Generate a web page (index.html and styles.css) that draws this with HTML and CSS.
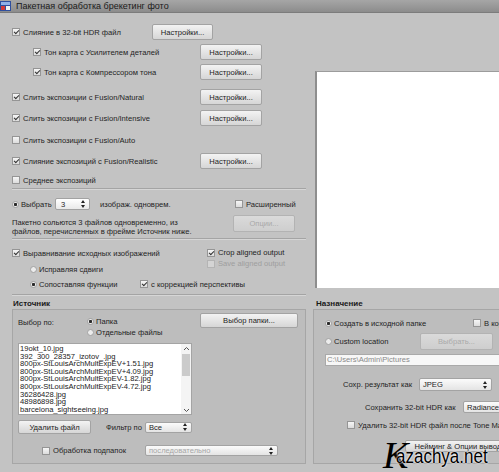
FILE: index.html
```html
<!DOCTYPE html>
<html lang="ru">
<head>
<meta charset="utf-8">
<title>Пакетная обработка брекетинг фото</title>
<link rel="stylesheet" href="styles.css">
</head>
<body>
<div class="window">
  <div class="titlebar">
    <span class="appicon"><svg width="11" height="10" viewBox="0 0 11 10"><rect x="0" y="0" width="11" height="10" fill="#2f4f9e"/><rect x="1" y="1" width="9" height="3" fill="#8fb0e8"/><rect x="1" y="5" width="4" height="4" fill="#d23a3a"/><rect x="6" y="5" width="4" height="4" fill="#f2f2f2"/></svg></span>
    <span class="title">Пакетная обработка брекетинг фото</span>
  </div>

  <div class="top">
    <div class="left">
      <div class="row r1 g-first">
        <span class="chk"><span class="cb on"></span>Слияние в 32-bit HDR файл</span>
        <span class="btn">Настройки...</span>
      </div>
      <div class="row r2 g-sub">
        <span class="chk"><span class="cb on"></span>Тон карта с Усилителем деталей</span>
        <span class="btn">Настройки...</span>
      </div>
      <div class="row r3 g-sub">
        <span class="chk"><span class="cb on"></span>Тон карта с Компрессором тона</span>
        <span class="btn">Настройки...</span>
      </div>
      <div class="row r4 g-main">
        <span class="chk"><span class="cb on"></span>Слить экспозиции с Fusion/Natural</span>
        <span class="btn">Настройки...</span>
      </div>
      <div class="row r5 g-main">
        <span class="chk"><span class="cb on"></span>Слить экспозиции с Fusion/Intensive</span>
        <span class="btn">Настройки...</span>
      </div>
      <div class="row r6 g-main">
        <span class="chk"><span class="cb"></span>Слить экспозиции с Fusion/Auto</span>
      </div>
      <div class="row r7 g-main">
        <span class="chk"><span class="cb on"></span>Слияние экспозиций с Fusion/Realistic</span>
        <span class="btn">Настройки...</span>
      </div>
      <div class="row r8 short">
        <span class="chk"><span class="cb"></span>Среднее экспозиций</span>
      </div>
      <div class="sep s1"></div>

      <div class="row r9 short">
        <span class="chk pick"><span class="rb on"></span>Выбрать</span>
        <span class="spin"><span>3</span><svg width="4" height="8" viewBox="0 0 4 8"><path d="M0 3L2 0L4 3ZM0 5L2 8L4 5Z" fill="#222"/></svg></span>
        <span class="count">изображ. одноврем.</span>
        <span class="chk"><span class="cb"></span>Расширенный</span>
      </div>
      <div class="opts">
        <div class="note">Пакетно сольются 3 файлов одновременно, из<br>файлов, перечисленных в фрейме Источник ниже.</div>
        <span class="btn dis optbtn">Опции...</span>
      </div>
      <div class="sep s2"></div>

      <div class="align">
        <div class="acol">
          <div class="arow first"><span class="chk"><span class="cb on"></span>Выравнивание исходных изображений</span></div>
          <div class="arow fix"><span class="chk"><span class="rb"></span>Исправляя сдвиги</span></div>
        </div>
        <div class="bcol">
          <div class="brow"><span class="chk"><span class="cb on"></span>Crop aligned output</span></div>
          <div class="brow dim"><span class="chk"><span class="cb off"></span>Save aligned output</span></div>
        </div>
      </div>
      <div class="row match">
        <span class="chk feat"><span class="rb on"></span>Сопоставляя функции</span>
        <span class="chk"><span class="cb on"></span>с коррекцией перспективы</span>
      </div>
      <div class="sep s3"></div>
    </div>
    <div class="right">
      <div class="preview"></div>
    </div>
  </div>

  <div class="bottom">
    <div class="group src">
      <div class="gtitle">Источник</div>
      <div class="gbox">
        <div class="src-top">
          <div class="lbl">Выбор по:</div>
          <div class="radios">
            <div class="rrow"><span class="rb on"></span>Папка</div>
            <div class="rrow"><span class="rb"></span>Отдельные файлы</div>
          </div>
          <span class="btn folder">Выбор папки...</span>
        </div>
        <div class="listbox">
          <div class="items">
            <div>19okt_10.jpg</div>
            <div>392_300_28357_izotov_.jpg</div>
            <div>800px-StLouisArchMultExpEV+1.51.jpg</div>
            <div>800px-StLouisArchMultExpEV+4.09.jpg</div>
            <div>800px-StLouisArchMultExpEV-1.82.jpg</div>
            <div>800px-StLouisArchMultExpEV-4.72.jpg</div>
            <div>36286428.jpg</div>
            <div>48986898.jpg</div>
            <div>barcelona_sightseeing.jpg</div>
          </div>
          <div class="scroll">
            <svg width="7" height="5" viewBox="0 0 7 5"><path d="M1 4L3.5 1.5L6 4" fill="none" stroke="#555" stroke-width="1"/></svg>
            <div class="thumb"></div>
            <div class="track"></div>
            <svg width="7" height="5" viewBox="0 0 7 5"><path d="M1 1L3.5 3.5L6 1" fill="none" stroke="#555" stroke-width="1"/></svg>
          </div>
        </div>
        <div class="src-row">
          <span class="btn del">Удалить файл</span>
          <span class="flt">Фильтр по</span>
          <span class="sel fsel"><span>Все</span><svg width="4" height="8" viewBox="0 0 4 8"><path d="M0 3L2 0L4 3ZM0 5L2 8L4 5Z" fill="#222"/></svg></span>
        </div>
        <div class="src-row sub">
          <span class="chk subchk"><span class="cb"></span>Обработка подпапок</span>
          <span class="sel psel dis"><span>последовательно</span><svg width="4" height="8" viewBox="0 0 4 8"><path d="M0 3L2 0L4 3ZM0 5L2 8L4 5Z" fill="#222"/></svg></span>
        </div>
      </div>
    </div>

    <div class="group dst">
      <div class="gtitle">Назначение</div>
      <div class="gbox">
        <div class="drow d1">
          <span class="chk here"><span class="rb on"></span>Создать в исходной папке</span>
          <span class="chk"><span class="cb"></span>В корневой</span>
        </div>
        <div class="drow d2">
          <span class="chk custom"><span class="rb"></span>Custom location</span>
          <span class="btn dis choose">Выбрать...</span>
        </div>
        <div class="path">C:\Users\Admin\Pictures</div>
        <div class="drow d3">
          <span class="flab l1">Сохр. результат как</span>
          <span class="sel jsel"><span>JPEG</span><svg width="4" height="8" viewBox="0 0 4 8"><path d="M0 3L2 0L4 3ZM0 5L2 8L4 5Z" fill="#222"/></svg></span>
        </div>
        <div class="drow d4">
          <span class="flab l2">Сохранить 32-bit HDR как</span>
          <span class="sel rsel"><span>Radiance</span></span>
        </div>
        <div class="drow d5">
          <span class="chk"><span class="cb"></span>Удалить 32-bit HDR файл после Tone Mapping</span>
        </div>
        <div class="drow d6">
          <span class="btn naming">Нейминг &amp; Опции вывода</span>
        </div>
      </div>
    </div>
  </div>

  <div class="watermark"><span class="wk">K</span><span class="wt">azachya.net</span></div>
</div>
</body>
</html>
```

FILE: styles.css
```css
* { box-sizing: border-box; }

html, body {
  margin: 0;
  padding: 0;
}

body {
  width: 499px;
  height: 472px;
  overflow: hidden;
  background: #c3c3c3;
  font-family: "Liberation Sans", Arial, sans-serif;
  font-size: 7.6px;
  color: #1e1e1e;
}

.window {
  position: relative;
  width: 499px;
  height: 472px;
  overflow: hidden;
}

/* title bar */
.titlebar {
  height: 13px;
  display: flex;
  align-items: center;
  background: linear-gradient(#a6a6a6, #8c8c8c);
  border-bottom: 1px solid #7c7c7c;
}
.appicon { display: flex; width: 16px; }
.title { font-size: 9px; color: #1a1a1a; }

/* top area */
.top { display: flex; height: 283px; }
.left { width: 306px; flex: none; padding: 11px 0 0 12px; }
.right { flex: 1; padding: 58px 0 0 9px; }
.preview {
  height: 217px;
  background: #ffffff;
  border-top: 1px solid #9c9c9c;
  border-left: 2px solid #8e8e8e;
}

.row { display: flex; align-items: center; height: 16px; }
.g-first { display: grid; grid-template-columns: 140px 61px; }
.g-main { display: grid; grid-template-columns: 188px 62px; }
.g-sub { display: grid; grid-template-columns: 167px 62px; padding-left: 21px; }
.r2, .r3 { margin-top: 4px; }
.r4 { margin-top: 9px; }
.r5 { margin-top: 5px; }
.r6 { margin-top: 6px; }
.r7 { margin-top: 5px; }
.r8 { margin-top: 4px; }
.short { height: 14px; }

.sep {
  height: 2px;
  border-top: 1px solid #a4a4a4;
  border-bottom: 1px solid #d6d6d6;
}
.s1 { margin-top: 1px; }
.s2 { margin-top: 1px; }
.s3 { margin-top: 4px; }

.chk { display: flex; flex: none; align-items: center; white-space: nowrap; }

.cb {
  position: relative;
  flex: none;
  width: 8px;
  height: 8px;
  margin-right: 3px;
  border: 1px solid #959595;
  background: linear-gradient(#f6f6f6, #dcdcdc);
}
.cb.on::after {
  content: "";
  position: absolute;
  left: 2px;
  top: 0;
  width: 2px;
  height: 4px;
  border: solid #333;
  border-width: 0 1px 1px 0;
  transform: rotate(45deg);
}
.cb.off { border-color: #b4b4b4; background: #d4d4d4; }

.rb {
  flex: none;
  width: 7px;
  height: 7px;
  margin-right: 2px;
  border-radius: 50%;
  border: 1px solid #a2a2a2;
  background: #ececec;
}
.rb.on { background: radial-gradient(circle, #2a2a2a 0 1.3px, #ececec 2px); }

.btn {
  display: flex;
  flex: none;
  align-items: center;
  justify-content: center;
  height: 16px;
  border: 1px solid #a3a3a3;
  border-radius: 2px;
  background: linear-gradient(#f3f3f3, #d6d6d6);
  color: #222;
  white-space: nowrap;
  overflow: hidden;
}
.btn.dis { color: #a9a9a9; background: linear-gradient(#dadada, #cecece); border-color: #b3b3b3; }

/* select row */
.r9 { margin-top: 7px; }
.pick { width: 43px; }
.spin {
  width: 35px;
  height: 12px;
  display: flex;
  align-items: center;
  justify-content: space-between;
  padding: 0 4px 0 5px;
  background: linear-gradient(#ffffff, #e9e9e9);
  border: 1px solid #a2a2a2;
  border-radius: 2px;
}
.count { width: 135px; margin-left: 10px; }

.opts { display: flex; align-items: flex-start; height: 23px; margin-top: 3px; }
.note { width: 221px; padding-top: 4px; line-height: 9px; }
.optbtn { width: 62px; height: 17px; margin-top: 1px; }

.align { display: flex; margin-top: 7px; }
.acol { width: 195px; }
.arow { height: 12px; display: flex; align-items: center; }
.arow.fix { margin-top: 4px; padding-left: 18px; }
.brow { height: 11px; display: flex; align-items: center; }
.brow.dim { color: #9e9e9e; }

.match { height: 12px; margin-top: 3px; padding-left: 18px; }
.feat { width: 110px; }

/* bottom */
.bottom { display: flex; padding-top: 3px; }
.group { flex: none; }
.src { margin-left: 12px; width: 294px; }
.dst { margin-left: 7px; width: 220px; }
.gtitle { height: 10px; line-height: 10px; font-size: 8px; font-weight: bold; padding-left: 1px; color: #1a1a1a; }
.dst .gtitle { padding-left: 3px; }
.gbox {
  height: 155px;
  border: 1px solid #a6a6a6;
  background: #bdbdbd;
}

.src .gbox { padding: 3px 7px 0 5px; }
.src-top { display: flex; height: 25px; }
.lbl { width: 69px; padding-top: 5px; line-height: 10px; }
.radios { padding-top: 3px; }
.rrow { height: 11px; display: flex; align-items: center; }
.folder { margin-left: auto; width: 98px; height: 15px; }

.listbox {
  margin-top: 5px;
  width: 174px;
  height: 72px;
  display: flex;
  background: #ffffff;
  border: 1px solid #a4a4a4;
}
.items { flex: 1; padding: 1px 0 0 1px; line-height: 7.6px; font-size: 7.6px; color: #222; white-space: nowrap; overflow: hidden; }
.scroll {
  width: 10px;
  display: flex;
  flex-direction: column;
  align-items: center;
  padding: 2px 0 1px;
  background: #f4f4f4;
}
.thumb { width: 8px; height: 22px; margin-top: 3px; background: #cbcbcb; }
.track { flex: 1; }

.src-row { display: flex; align-items: center; margin-top: 5px; height: 14px; }
.del { width: 73px; height: 14px; }
.flt { margin-left: 15px; width: 39px; }
.sel {
  display: flex;
  flex: none;
  align-items: center;
  justify-content: space-between;
  height: 11px;
  padding: 0 4px 0 3px;
  border: 1px solid #a3a3a3;
  border-radius: 2px;
  background: linear-gradient(#fbfbfb, #e4e4e4);
  white-space: nowrap;
  overflow: hidden;
}
.sel.dis { color: #a6a6a6; }
.fsel { width: 47px; }
.src-row.sub { margin-top: 10px; height: 13px; }
.subchk { padding-left: 24px; width: 127px; }
.psel { width: 133px; }

.dst .gbox { padding-left: 11px; }
.drow { display: flex; align-items: center; white-space: nowrap; }
.flab { flex: none; }
.d1 { margin-top: 7px; height: 12px; }
.here { width: 148px; }
.d2 { margin-top: 4px; height: 17px; }
.custom { width: 95px; }
.choose { width: 73px; height: 17px; }
.path {
  margin-top: 4px;
  height: 12px;
  width: 210px;
  line-height: 10px;
  padding-left: 1px;
  color: #8a8a8a;
  background: #f7f7f7;
  border: 1px solid #a9a9a9;
}
.d3 { margin-top: 12px; height: 13px; padding-left: 18px; }
.l1 { width: 76px; }
.jsel { width: 73px; height: 13px; }
.d4 { margin-top: 10px; height: 12px; padding-left: 40px; }
.l2 { width: 98px; }
.rsel { width: 60px; height: 12px; }
.d5 { margin-top: 6px; height: 12px; padding-left: 22px; }
.d6 { margin-top: 9px; height: 12px; padding-left: 80px; }
.naming { width: 110px; height: 12px; }

/* watermark overlay */
.watermark {
  position: absolute;
  left: 383px;
  top: 434px;
  width: 120px;
  height: 40px;
  display: flex;
  align-items: flex-end;
  color: #000;
  pointer-events: none;
}
.wk {
  font-family: "Liberation Serif", serif;
  font-style: italic;
  font-size: 38px;
  line-height: 38px;
  margin-right: -12px;
}
.wt {
  display: inline-block;
  font-family: "Liberation Sans", Arial, sans-serif;
  font-size: 20px;
  line-height: 20px;
  margin-bottom: 8px;
  transform: scaleX(0.85);
  transform-origin: left bottom;
  text-shadow: 0 0 2px #fff, 0 0 2px #fff;
}
```
